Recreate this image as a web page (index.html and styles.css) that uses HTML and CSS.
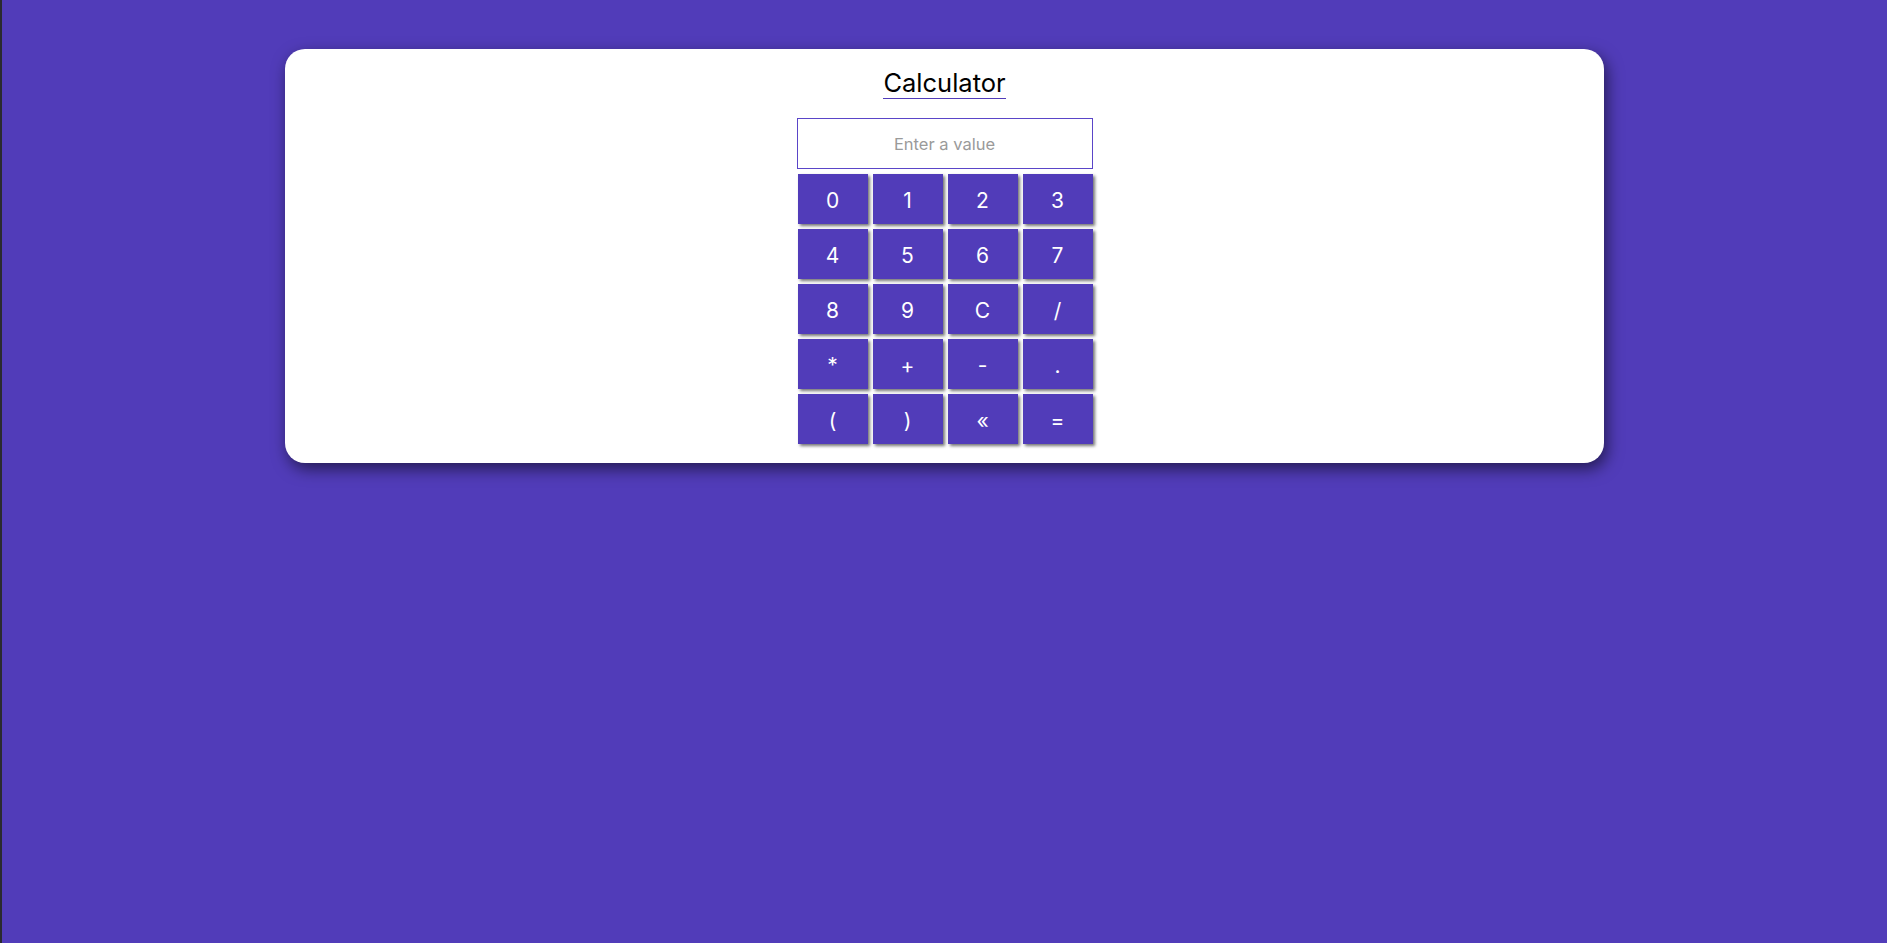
FILE: index.html
```html
<!DOCTYPE html>
<html lang="en">
<head>
<meta charset="utf-8">
<title>Calculator</title>
<link rel="stylesheet" href="styles.css">
</head>
<body>
<main class="card">
  <h1 class="title">Calculator</h1>
  <input class="display" type="text" placeholder="Enter a value">
  <div class="keys">
    <button class="key">0</button>
    <button class="key">1</button>
    <button class="key">2</button>
    <button class="key">3</button>
    <button class="key">4</button>
    <button class="key">5</button>
    <button class="key">6</button>
    <button class="key">7</button>
    <button class="key">8</button>
    <button class="key">9</button>
    <button class="key">C</button>
    <button class="key">/</button>
    <button class="key">*</button>
    <button class="key">+</button>
    <button class="key">-</button>
    <button class="key">.</button>
    <button class="key">(</button>
    <button class="key">)</button>
    <button class="key">&laquo;</button>
    <button class="key">=</button>
  </div>
</main>
</body>
</html>
```
FILE: styles.css
```css
html, body {
  height: 100%;
}
body {
  margin: 0;
  border-left: 2px solid #2a2a30;
  background: #513cb9;
  font-family: Inter, "Open Sans", sans-serif;
  padding-top: 49px;
  box-sizing: border-box;
}
.card {
  width: 70%;
  margin: 0 auto;
  background: #ffffff;
  border-radius: 20px;
  box-shadow: 3px 6px 16px rgba(0, 0, 0, 0.55);
  display: flex;
  flex-direction: column;
  align-items: center;
  padding: 17px 0 19px;
}
.title {
  margin: 0;
  font-size: 25.5px;
  font-weight: 400;
  line-height: 30px;
  color: #000;
  border-bottom: 1px solid #513cb9;
  padding-top: 2px;
}
.display {
  margin-top: 19px;
  width: 296px;
  height: 51px;
  box-sizing: border-box;
  border: 1px solid #5a45c8;
  outline: none;
  font-family: inherit;
  font-size: 16.5px;
  text-align: center;
  color: #333;
  background: #fff;
}
.display::placeholder {
  color: #9a9a9a;
}
.keys {
  margin-top: 5px;
  display: grid;
  grid-template-columns: repeat(4, 70px);
  grid-auto-rows: 50px;
  gap: 5px;
  padding-left: 1px;
}
.key {
  border: none;
  background: #513cb9;
  color: #fff;
  font-family: inherit;
  font-size: 21px;
  box-shadow: 2px 2px 3px rgba(0, 0, 0, 0.55);
  padding: 2px 0 0;
  cursor: pointer;
}
```
